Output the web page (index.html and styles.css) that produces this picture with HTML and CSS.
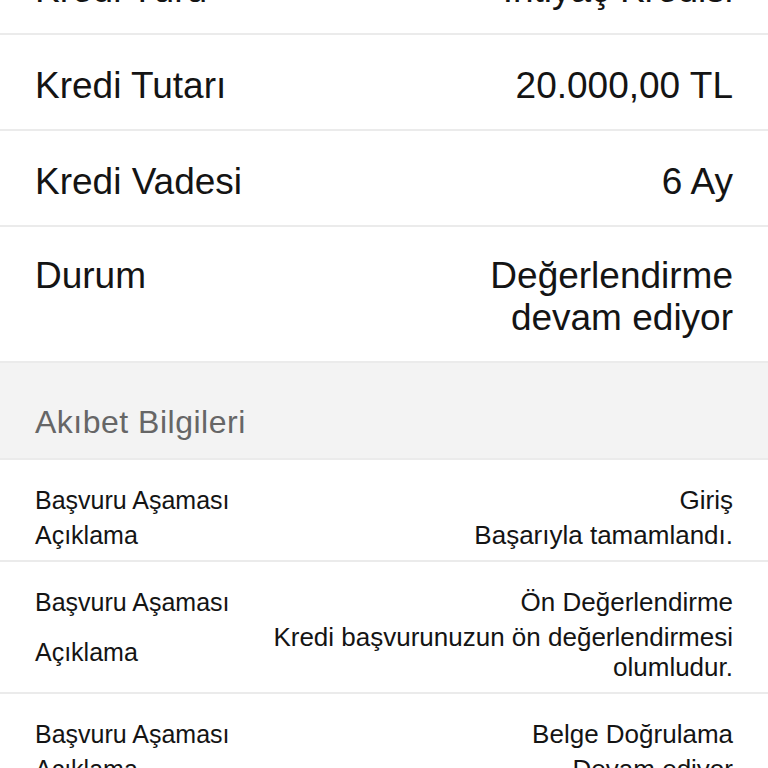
FILE: index.html
```html
<!DOCTYPE html>
<html lang="tr">

<head>
    <meta charset="UTF-8">
    <meta name="viewport" content="width=device-width, initial-scale=1.0">
    <title>Başvuru Detayı</title>
    <link rel="stylesheet" href="styles.css">
</head>

<body>
    <div id="details">
        <!-- Kredi bilgileri -->
        <div class="detail-row">
            <span class="label">Kredi Türü</span>
            <span class="value">İhtiyaç Kredisi</span>
        </div>
        <div class="detail-row">
            <span class="label">Kredi Tutarı</span>
            <span class="value">20.000,00 TL</span>
        </div>
        <div class="detail-row">
            <span class="label">Kredi Vadesi</span>
            <span class="value">6 Ay</span>
        </div>
        <div class="detail-row status-row">
            <span class="label">Durum</span>
            <span class="value">Değerlendirme devam ediyor</span>
        </div>

        <div class="section-title">Akıbet Bilgileri</div>

        <!-- Akıbet listesi -->
        <div class="stage">
            <span class="stage-label">Başvuru Aşaması</span>
            <span class="stage-value">Giriş</span>
            <span class="stage-label">Açıklama</span>
            <span class="stage-value">Başarıyla tamamlandı.</span>
        </div>
        <div class="stage">
            <span class="stage-label">Başvuru Aşaması</span>
            <span class="stage-value">Ön Değerlendirme</span>
            <span class="stage-label">Açıklama</span>
            <span class="stage-value">Kredi başvurunuzun ön değerlendirmesi olumludur.</span>
        </div>
        <div class="stage">
            <span class="stage-label">Başvuru Aşaması</span>
            <span class="stage-value">Belge Doğrulama</span>
            <span class="stage-label">Açıklama</span>
            <span class="stage-value">Devam ediyor</span>
        </div>
    </div>
</body>

</html>
```

FILE: styles.css
```css
body {
    font-family: "Liberation Sans", Arial, sans-serif;
    margin: 0;
    padding: 0;
    background-color: #ffffff;
    color: #141414;
    overflow: hidden;
}

/* page is scrolled down a little */
#details {
    margin-top: -61px;
}

.detail-row {
    display: flex;
    justify-content: space-between;
    align-items: flex-start;
    gap: 20px;
    padding: 30px 35px 22px;
    font-size: 37px;
    line-height: 42px;
    border-bottom: 2px solid #ebebeb;
}

.status-row {
    padding-top: 28px;
}

.detail-row .value {
    text-align: right;
    max-width: 300px;
}

.section-title {
    background-color: #f3f3f3;
    color: #666666;
    font-size: 32px;
    letter-spacing: 0.5px;
    line-height: 38px;
    padding: 40px 35px 17px;
    border-bottom: 2px solid #ebebeb;
}

.stage {
    display: grid;
    grid-template-columns: auto 1fr;
    column-gap: 10px;
    row-gap: 5px;
    padding: 25px 35px 10px;
    font-size: 26px;
    line-height: 30px;
    border-bottom: 2px solid #ebebeb;
}

.stage-label {
    align-self: center;
    font-size: 25px;
}

.stage-value {
    text-align: right;
}
```
